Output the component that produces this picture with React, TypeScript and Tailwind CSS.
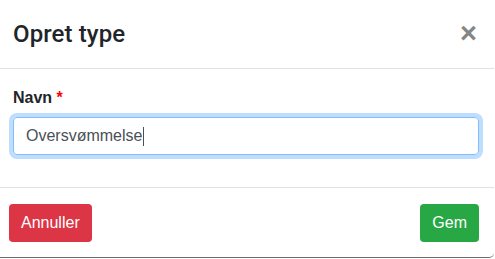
import React from 'react';

export default function App() {
  return (
    <div className="w-[495px] h-[259px] bg-white overflow-hidden font-['Liberation_Sans',Arial,sans-serif] text-[#212529]">
      <div className="w-[494px] h-[258px] flex flex-col border-b border-[#6b6b6b] rounded-br-[5px]">
        <div className="h-[69px] flex items-start justify-between pl-[13px] pr-[17px] pt-[20px] border-b border-[#dee2e6]">
          <h4 className="text-[24px] leading-[1.2] font-medium font-['Roboto',Arial,sans-serif] tracking-[0.1px]">Opret type</h4>
          <button className="text-[29px] leading-none font-bold text-[#858585] mt-[-1px]">×</button>
        </div>

        <div className="h-[118px] pl-[13px] pr-[15px] pt-[17px]">
          <label className="block text-[16px] leading-[24px] font-bold mb-[7px]">
            Navn <span className="text-[#ff0000]">*</span>
          </label>
          <div className="h-[38px] w-[466px] flex items-center px-[12px] border border-[#80bdff] rounded-[4px] shadow-[0_0_0_4px_rgba(0,123,255,0.25)] text-[16px] text-[#495057]">
            <span>Oversvømmelse</span>
            <span className="inline-block w-px h-[19px] bg-[#495057] ml-px" />
          </div>
        </div>

        <div className="flex-1 flex items-start justify-between border-t border-[#dee2e6] pl-[9px] pr-[15px] pt-[16px]">
          <button className="h-[38px] px-[12px] rounded-[4px] bg-[#dc3545] text-white text-[16px]">Annuller</button>
          <button className="h-[38px] px-[12px] rounded-[4px] bg-[#28a745] text-white text-[16px]">Gem</button>
        </div>
      </div>
    </div>
  );
}
